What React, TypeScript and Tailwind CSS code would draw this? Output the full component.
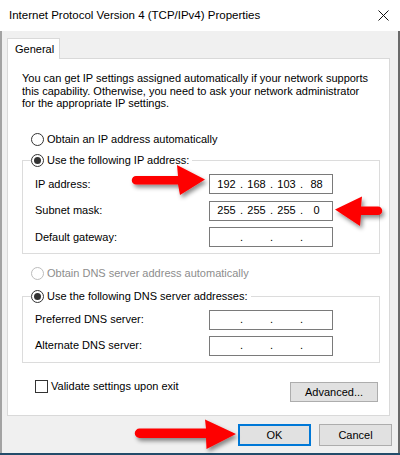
import React, { Fragment } from "react";

const FONT = "font-['Liberation_Sans',Arial,sans-serif]";

function Radio({ checked, disabled }: { checked?: boolean; disabled?: boolean }) {
  return (
    <span
      className={`w-[13px] h-[13px] rounded-full border bg-white flex items-center justify-center shrink-0 ${
        disabled ? "border-[#bcbcbc]" : "border-[#333333]"
      }`}
    >
      {checked && <span className="w-[7px] h-[7px] rounded-full bg-[#333333]" />}
    </span>
  );
}

function RadioRow({ label, checked, disabled }: { label: string; checked?: boolean; disabled?: boolean }) {
  return (
    <div className="h-[16px] flex items-center gap-[3px]">
      <Radio checked={checked} disabled={disabled} />
      <span className={disabled ? "text-[#8d8d8d]" : "text-black"}>{label}</span>
    </div>
  );
}

function IpBox({ v }: { v?: string[] }) {
  const parts = v ?? ["", "", "", ""];
  return (
    <div className="w-[124px] h-[20px] border border-[#7a7a7a] bg-white flex items-center pl-[4.5px] shrink-0">
      {parts.map((p, i) => (
        <Fragment key={i}>
          <span className="w-[24px] text-center">{p}</span>
          {i < 3 && <span className="w-[6px] text-center">.</span>}
        </Fragment>
      ))}
    </div>
  );
}

function Row({ label, v }: { label: string; v?: string[] }) {
  return (
    <div className="flex items-center h-[20px]">
      <span className="w-[186px] pl-[12px] shrink-0">{label}</span>
      <IpBox v={v} />
    </div>
  );
}

export default function App() {
  return (
    <div className={`${FONT} relative w-[400px] h-[455px] flex flex-col bg-[#f0f0f0] text-[11px] text-black leading-[13px] overflow-hidden`}>
      {/* title bar */}
      <div className="h-[31px] bg-white flex items-center justify-between pl-[9px] pr-[10px] shrink-0">
        <span className="text-[11.5px]">Internet Protocol Version 4 (TCP/IPv4) Properties</span>
        <svg width="11" height="11" viewBox="0 0 11 11" className="mr-[1px]">
          <path d="M0.5 0.5 L10.5 10.5 M10.5 0.5 L0.5 10.5" stroke="#111" strokeWidth="1" />
        </svg>
      </div>

      {/* body */}
      <div className="flex-1 flex flex-col border-l-2 border-r-2 border-l-[#a3a3a3] border-r-[#6a6a6a]">
        <div className="pl-[5px] pr-[8px] pt-[7px]">
          {/* tab */}
          <div className="relative z-10 w-[53px] h-[21px] -mb-[1px] bg-white border border-b-0 border-[#d9d9d9] pl-[7px] flex items-center">
            General
          </div>
          {/* panel */}
          <div className="bg-white border border-[#d9d9d9] pt-[13px] pl-[14px] pr-[9px] pb-[13px]">
            <p className="leading-[12.5px]">
              You can get IP settings assigned automatically if your network supports
              <br />
              this capability. Otherwise, you need to ask your network administrator
              <br />
              for the appropriate IP settings.
            </p>

            <div className="mt-[22px] pl-[9px]">
              <RadioRow label="Obtain an IP address automatically" />
            </div>

            <fieldset className="mt-[4.5px] border border-[#dcdcdc] pb-[6px]">
              <legend className="ml-[8px] pr-[3px]">
                <RadioRow label="Use the following IP address:" checked />
              </legend>
              <div className="mt-[6px] flex flex-col gap-[6.5px]">
                <Row label="IP address:" v={["192", "168", "103", "88"]} />
                <Row label="Subnet mask:" v={["255", "255", "255", "0"]} />
                <Row label="Default gateway:" />
              </div>
            </fieldset>

            <div className="mt-[11px] pl-[9px]">
              <RadioRow label="Obtain DNS server address automatically" disabled />
            </div>

            <fieldset className="mt-[7px] border border-[#dcdcdc] pb-[6.5px]">
              <legend className="ml-[8px] pr-[3px]">
                <RadioRow label="Use the following DNS server addresses:" checked />
              </legend>
              <div className="mt-[5.5px] flex flex-col gap-[6px]">
                <Row label="Preferred DNS server:" />
                <Row label="Alternate DNS server:" />
              </div>
            </fieldset>

            <div className="mt-[17px] flex items-start justify-between">
              <div className="flex items-center gap-[3px] pl-[13px] h-[13px]">
                <span className="w-[13px] h-[13px] border border-[#333333] bg-white shrink-0" />
                <span>Validate settings upon exit</span>
              </div>
              <button className="mt-[2px] mr-[2px] w-[88px] h-[20px] bg-[#e1e1e1] border border-[#adadad] flex items-center justify-center">
                Advanced...
              </button>
            </div>
          </div>
        </div>

        {/* bottom buttons */}
        <div className="mt-[8px] pr-[6px] flex justify-end gap-[8px]">
          <button className="w-[73px] h-[22px] bg-[#e1e1e1] border-2 border-[#0078d7] flex items-center justify-center">
            OK
          </button>
          <button className="w-[73px] h-[22px] bg-[#e1e1e1] border border-[#adadad] flex items-center justify-center">
            Cancel
          </button>
        </div>
        <div className="flex-1" />
      </div>
      <div className="h-[2px] bg-[#234c6a] shrink-0" />

      {/* red arrows overlay */}
      <svg className="absolute left-0 top-0 pointer-events-none" width="400" height="455" viewBox="0 0 400 455">
        <defs>
          <filter id="sh" x="-20%" y="-50%" width="140%" height="200%">
            <feDropShadow dx="2" dy="3" stdDeviation="2" floodColor="#000" floodOpacity="0.45" />
          </filter>
        </defs>
        <g fill="#fe0000" filter="url(#sh)">
          <path d="M136 176 L178 176 L177 165 L205 179.5 L180 195 L178 184.5 L136 184.5 A4.25 4.25 0 0 1 136 176 Z" />
          <path d="M335 209.5 L362 196.5 L361 206.5 L378 206.5 A4.25 4.25 0 0 1 378 215 L361 215 L360 226 Z" />
          <path d="M139.5 428.5 L206 428.5 L205 419.5 L236 434 L206.5 449 L206 438 L139.5 438 A4.75 4.75 0 0 1 139.5 428.5 Z" />
        </g>
      </svg>
    </div>
  );
}
